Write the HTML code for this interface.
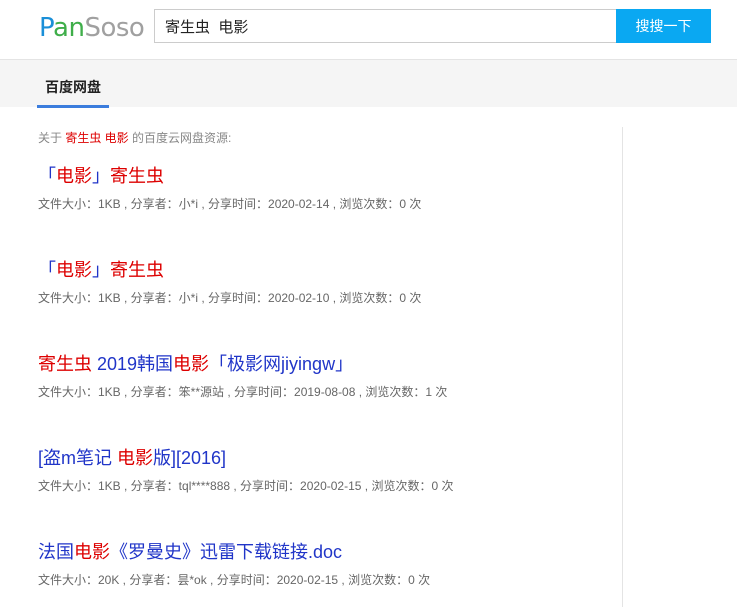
<!DOCTYPE html>
<html><head><meta charset="utf-8"><style>
*{margin:0;padding:0;box-sizing:border-box}
body{width:737px;height:607px;overflow:hidden;background:#fff;font-family:"Liberation Sans","Noto Sans CJK SC",sans-serif;position:relative}
.logo{position:absolute;left:39px;top:13px;font-size:26px;font-family:"DejaVu Sans",sans-serif;letter-spacing:-0.5px}
.inp{position:absolute;left:154px;top:9px;width:463px;height:34px;border:1px solid #ccc;font-size:15px;padding:6px 0 0 10px;color:#222}
.btn{position:absolute;left:616px;top:9px;width:95px;height:34px;background:#0aa8f2;color:#fff;font-size:14px;text-align:center;line-height:34px}
.bar{position:absolute;left:0;top:59px;width:737px;height:48px;background:#f5f5f5;border-top:1px solid #e4e4e4}
.tab{position:absolute;left:37px;top:17px;font-size:14px;font-weight:bold;color:#222;width:72px;text-align:center;height:31px;border-bottom:3px solid #3b7ddd}
.vl{position:absolute;left:622px;top:127px;width:1px;height:480px;background:#e4e4e4}
.about{position:absolute;left:38px;top:129px;font-size:12px;color:#888}
.r{color:#d00}
.it{position:absolute;left:38px}
.t{font-size:18px;color:#2035c8}
.m{font-size:12px;color:#666;margin-top:7px}
</style></head><body>
<div class="logo"><span style="color:#1a8fd8">P</span><span style="color:#3fae4a">an</span><span style="color:#a0a0a0">Soso</span></div>
<div class="inp">寄生虫&nbsp; 电影</div>
<div class="btn">搜搜一下</div>
<div class="bar"><div class="tab">百度网盘</div></div>
<div class="vl"></div>
<div class="about">关于 <span class="r">寄生虫 电影</span> 的百度云网盘资源:</div>
<div class="it" style="top:162px"><div class="t">「<span class="r">电影</span>」<span class="r">寄生虫</span></div><div class="m">文件大小：1KB , 分享者：小*i , 分享时间：2020-02-14 , 浏览次数：0 次</div></div>
<div class="it" style="top:256px"><div class="t">「<span class="r">电影</span>」<span class="r">寄生虫</span></div><div class="m">文件大小：1KB , 分享者：小*i , 分享时间：2020-02-10 , 浏览次数：0 次</div></div>
<div class="it" style="top:350px"><div class="t"><span class="r">寄生虫</span> 2019韩国<span class="r">电影</span>「极影网jiyingw」</div><div class="m">文件大小：1KB , 分享者：笨**源站 , 分享时间：2019-08-08 , 浏览次数：1 次</div></div>
<div class="it" style="top:444px"><div class="t">[盗m笔记 <span class="r">电影</span>版][2016]</div><div class="m">文件大小：1KB , 分享者：tql****888 , 分享时间：2020-02-15 , 浏览次数：0 次</div></div>
<div class="it" style="top:538px"><div class="t">法国<span class="r">电影</span>《罗曼史》迅雷下载链接.doc</div><div class="m">文件大小：20K , 分享者：昙*ok , 分享时间：2020-02-15 , 浏览次数：0 次</div></div>
</body></html>
